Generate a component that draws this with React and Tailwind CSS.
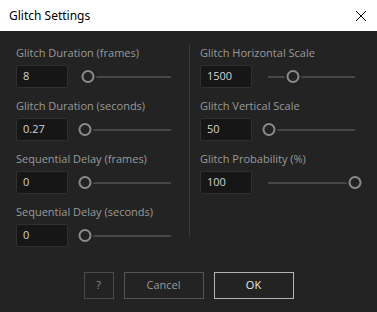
import React from 'react';

const font = { fontFamily: '"Open Sans", "Noto Sans", sans-serif' };

function Slider({ pct }) {
  return (
    <div className="relative h-[13px] w-[99px]">
      <div className="absolute left-[6px] right-[6px] top-[6px] h-[2px] bg-[#474747]" />
      <div
        className="absolute top-0 h-[13px] w-[13px] -translate-x-1/2 rounded-full border-2 border-[#8c8c8c] bg-[#232323] ring-2 ring-[#232323]"
        style={{ left: `calc(6.5px + ${pct} * (100% - 13px))` }}
      />
    </div>
  );
}

function Field({ label, value, pct }) {
  return (
    <div className="flex flex-col">
      <div className="h-[16px] text-[11px] leading-[16px] text-[#9a9a9a]">{label}</div>
      <div className="mt-[4px] flex items-center gap-[10px]">
        <div className="flex h-[23px] w-[52px] items-center rounded-[2px] border border-[#303030] bg-[#161616] pl-[6px] text-[11px] text-[#d4d4d4]">
          {value}
        </div>
        <Slider pct={pct} />
      </div>
    </div>
  );
}

const left = [
  { label: 'Glitch Duration (frames)', value: '8', pct: 0.035 },
  { label: 'Glitch Duration (seconds)', value: '0.27', pct: 0 },
  { label: 'Sequential Delay (frames)', value: '0', pct: 0 },
  { label: 'Sequential Delay (seconds)', value: '0', pct: 0 },
];

const right = [
  { label: 'Glitch Horizontal Scale', value: '1500', pct: 0.29 },
  { label: 'Glitch Vertical Scale', value: '50', pct: 0 },
  { label: 'Glitch Probability (%)', value: '100', pct: 1 },
];

export default function App() {
  return (
    <div className="flex h-[312px] w-[377px] flex-col bg-[#232323]" style={font}>
      <div className="flex h-[31px] items-center justify-between bg-white pl-[9px] pr-[10px]">
        <span className="text-[12px] text-black" style={{ fontFamily: '"Noto Sans", sans-serif' }}>
          Glitch Settings
        </span>
        <svg width="12" height="12" viewBox="0 0 12 12">
          <path d="M1 1 L11 11 M11 1 L1 11" stroke="#000" strokeWidth="1" />
        </svg>
      </div>

      <div className="flex pl-[16px] pt-[14px]">
        <div className="flex w-[173px] flex-col gap-[10px]">
          {left.map((f) => (
            <Field key={f.label} {...f} />
          ))}
        </div>
        <div className="mt-[-1px] h-[193px] w-px bg-[#3a3a3a]" />
        <div className="ml-[10px] flex flex-col gap-[10px]">
          {right.map((f) => (
            <Field key={f.label} {...f} />
          ))}
        </div>
      </div>

      <div className="mt-auto mb-[13px] flex justify-center gap-[10px] text-[11px]">
        <button className="h-[27px] w-[30px] border border-[#4a4a4a] text-[#8a8a8a]">?</button>
        <button className="h-[27px] w-[80px] border border-[#555] text-[#9a9a9a]">Cancel</button>
        <button className="h-[27px] w-[80px] border border-[#b4b4b4] text-[#e6e6e6]">OK</button>
      </div>
    </div>
  );
}
